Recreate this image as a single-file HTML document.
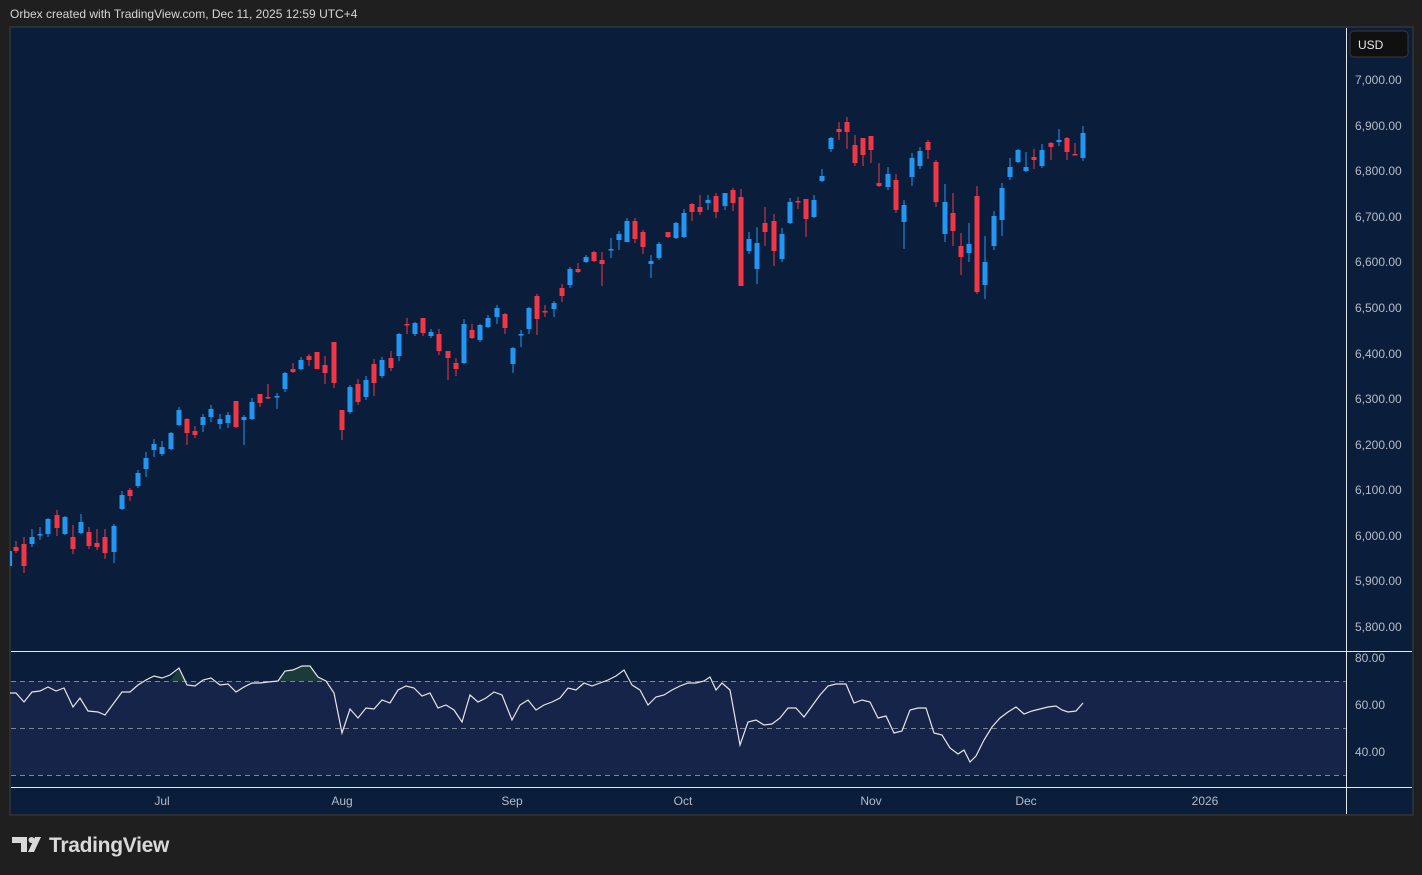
<!DOCTYPE html>
<html><head><meta charset="utf-8"><style>
html,body{margin:0;padding:0;background:#1f1f1f;width:1422px;height:875px;overflow:hidden;font-family:"Liberation Sans",sans-serif}
svg{position:absolute;left:0;top:0}
</style></head><body>
<svg width="1422" height="875" viewBox="0 0 1422 875" xmlns="http://www.w3.org/2000/svg" font-family="Liberation Sans, sans-serif">
<rect x="0" y="0" width="1422" height="875" fill="#1f1f1f"/>
<text x="10" y="18" font-size="12" fill="#d6d6d6">Orbex created with TradingView.com, Dec 11, 2025 12:59 UTC+4</text>
<rect x="9" y="26" width="1405" height="790" fill="#2a2e36"/>
<rect x="11" y="28" width="1401" height="786" fill="#0a1d3a"/>
<!-- RSI band -->
<rect x="11" y="681" width="1335" height="94" fill="#172449"/>
<path d="M170,681L179,668L187,681Z M278,681L285,671L302,666L310,666L318,677L326,681Z" fill="#1b3b3a"/>
<g stroke="#7d8699" stroke-width="1" stroke-dasharray="5,4">
<line x1="11" y1="681.5" x2="1346" y2="681.5"/>
<line x1="11" y1="728.5" x2="1346" y2="728.5"/>
<line x1="11" y1="775.5" x2="1346" y2="775.5"/>
</g>
<polyline fill="none" stroke="#e6e6e6" stroke-width="1.2" points="10,693 16,693 24,702 32,692 40,691 48,687 56,691 64,688 73,707 80,698 88,711 98,712 105,715 122,692 130,692 138,685 146,680 154,676 162,678 170,675 179,668 187,685 195,686 203,680 211,678 220,685 228,684 236,692 244,687 252,683 260,683 268,682 278,681 285,671 293,670 302,666 310,666 318,677 326,681 334,693 342,733 350,709 358,718 366,708 374,709 382,700 390,703 398,690 406,686 414,688 422,696 430,693 438,708 446,705 454,710 462,722 470,695 478,702 486,698 494,692 502,695 512,720 520,705 528,700 536,710 544,705 552,702 560,698 568,688 576,690 584,683 592,686 600,683 608,680 616,676 624,670 632,685 640,690 648,705 656,697 664,695 672,690 680,686 688,683 696,683 704,681 710,677 716,690 722,683 730,690 740,745 748,722 756,720 764,725 772,724 780,718 788,708 796,708 804,717 812,706 820,695 828,686 836,684 846,684 854,703 862,700 870,702 878,718 886,716 894,733 902,731 910,710 918,708 926,708 934,733 942,735 950,748 958,754 964,750 970,762 976,756 984,740 992,727 1000,718 1008,712 1016,707 1024,714 1032,711 1040,709 1048,707 1056,706 1062,710 1068,712 1076,711 1083,703"/>
<!-- separators -->
<g stroke="#e8e8e8" stroke-width="1">
<line x1="11" y1="651.5" x2="1412" y2="651.5"/>
<line x1="11" y1="787.5" x2="1412" y2="787.5"/>
<line x1="1346.5" y1="28" x2="1346.5" y2="814"/>
</g>
<!-- blue candles -->
<path stroke="#2196f3" stroke-width="1" fill="none" d="M32,529V547M40,527V540M48,518V537M65,516V535M81,514V534M114,524V563M122,491V510M138,470V488M146,452V477M154,439V457M162,441V456M171,432V450M179,407V426M203,414V432M211,405V422M220,414V429M228,412V428M244,415V445M252,398V420M277,393V409M285,372V392M301,357V370M350,385V414M366,376V400M382,357V378M399,333V361M415,322V336M431,329V338M464,319V364M480,324V342M488,315V328M497,305V324M513,347V373M521,330V347M529,307V334M554,301V317M570,267V288M586,255V263M611,238V258M619,231V250M627,218V242M651,255V278M659,242V260M676,222V239M684,209V238M708,195V210M725,193V210M749,232V254M757,227V284M782,228V262M790,198V224M814,195V218M822,169V182M831,137V152M888,167V190M904,200V249M912,153V186M920,147V169M945,184V242M969,223V262M985,236V299M994,211V250M1002,183V236M1010,158V180M1018,149V163M1026,152V172M1042,144V168M1059,129V146M1083,126V161"/>
<path fill="#2196f3" d="M29.5,537h5V544h-5zM37.5,534h5V535.5h-5zM45.5,519h5V534h-5zM62.5,517h5V534h-5zM78.5,522h5V533h-5zM111.5,526h5V552h-5zM119.5,495h5V509h-5zM135.5,473h5V486h-5zM143.5,458h5V469h-5zM151.5,444h5V450h-5zM159.5,447h5V454h-5zM168.5,433h5V449h-5zM176.5,410h5V425h-5zM200.5,417h5V425h-5zM208.5,409h5V417h-5zM217.5,419h5V424h-5zM225.5,415h5V423h-5zM241.5,417h5V420h-5zM249.5,402h5V419h-5zM274.5,396h5V397.5h-5zM282.5,373h5V389h-5zM298.5,360h5V369h-5zM347.5,387h5V412h-5zM363.5,380h5V397h-5zM379.5,360h5V376h-5zM396.5,334h5V356h-5zM412.5,323h5V334h-5zM428.5,332h5V336h-5zM461.5,324h5V363h-5zM477.5,325h5V340h-5zM485.5,318h5V327h-5zM494.5,308h5V317h-5zM510.5,348h5V364h-5zM518.5,334h5V335.5h-5zM526.5,308h5V329h-5zM551.5,303h5V309h-5zM567.5,269h5V285h-5zM583.5,257h5V262h-5zM608.5,249h5V250.5h-5zM616.5,234h5V240h-5zM624.5,221h5V242h-5zM648.5,261h5V264h-5zM656.5,244h5V258h-5zM673.5,223h5V238h-5zM681.5,213h5V237h-5zM705.5,200h5V203h-5zM722.5,193h5V206h-5zM746.5,239h5V251h-5zM754.5,243h5V269h-5zM779.5,234h5V259h-5zM787.5,202h5V223h-5zM811.5,200h5V217h-5zM819.5,176h5V181h-5zM828.5,138h5V149h-5zM885.5,174h5V187h-5zM901.5,205h5V222h-5zM909.5,158h5V177h-5zM917.5,151h5V166h-5zM942.5,202h5V234h-5zM966.5,244h5V253h-5zM982.5,262h5V285h-5zM991.5,216h5V246h-5zM999.5,188h5V220h-5zM1007.5,167h5V177h-5zM1015.5,150h5V162h-5zM1023.5,167h5V171h-5zM1039.5,150h5V166h-5zM1056.5,140h5V142h-5zM1080.5,133h5V158h-5z"/>
<rect x="10" y="551" width="2" height="15" fill="#2196f3"/>
<!-- red candles -->
<path stroke="#f23645" stroke-width="1" fill="none" d="M16,541V553M24,537V573M57,510V536M73,525V554M89,527V549M97,529V550M105,529V559M130,488V501M187,418V445M195,426V438M236,401V428M260,394V407M268,384V399M293,363V373M309,354V366M317,352V369M325,356V384M334,342V388M342,410V440M358,379V405M374,359V396M391,351V371M407,318V334M423,318V336M439,329V355M448,351V380M456,358V376M472,324V339M505,313V334M537,294V335M545,305V317M562,284V302M578,263V273M594,251V262M602,252V286M635,218V243M643,230V254M668,232V238M692,203V221M700,195V215M716,193V218M733,188V211M741,189V286M765,207V246M774,214V266M798,197V209M806,199V237M839,122V140M847,117V149M855,135V166M863,138V166M871,136V163M879,163V187M896,174V213M928,140V159M936,160V207M953,193V246M961,233V275M977,186V294M1034,149V169M1051,142V160M1067,137V160M1075,143V155"/>
<path fill="#f23645" d="M13.5,547h5V551h-5zM21.5,544h5V566h-5zM54.5,515h5V528h-5zM70.5,537h5V549h-5zM86.5,532h5V546h-5zM94.5,543h5V547h-5zM102.5,537h5V553h-5zM127.5,490h5V496h-5zM184.5,419h5V433h-5zM192.5,431h5V435h-5zM233.5,401h5V427h-5zM257.5,394h5V403h-5zM265.5,397h5V398.5h-5zM290.5,369h5V372h-5zM306.5,356h5V360h-5zM314.5,352h5V369h-5zM322.5,365h5V373h-5zM331.5,342h5V383h-5zM339.5,410h5V430h-5zM355.5,384h5V402h-5zM371.5,364h5V383h-5zM388.5,358h5V368h-5zM404.5,324h5V325.5h-5zM420.5,318h5V333h-5zM436.5,334h5V351h-5zM445.5,351h5V358h-5zM453.5,363h5V369h-5zM469.5,330h5V338h-5zM502.5,314h5V328h-5zM534.5,296h5V319h-5zM542.5,311h5V312.5h-5zM559.5,288h5V296h-5zM575.5,269h5V272h-5zM591.5,252h5V261h-5zM599.5,260h5V264h-5zM632.5,221h5V239h-5zM640.5,232h5V247h-5zM665.5,232h5V237h-5zM689.5,204h5V212h-5zM697.5,207h5V212h-5zM713.5,196h5V212h-5zM730.5,190h5V203h-5zM738.5,197h5V286h-5zM762.5,223h5V232h-5zM771.5,221h5V251h-5zM795.5,201h5V202.5h-5zM803.5,199h5V219h-5zM836.5,129h5V132h-5zM844.5,122h5V132h-5zM852.5,145h5V163h-5zM860.5,138h5V155h-5zM868.5,136h5V150h-5zM876.5,183h5V186h-5zM893.5,180h5V210h-5zM925.5,142h5V150h-5zM933.5,162h5V202h-5zM950.5,213h5V231h-5zM958.5,246h5V257h-5zM974.5,196h5V292h-5zM1031.5,157h5V160h-5zM1048.5,143h5V147h-5zM1064.5,138h5V152h-5zM1072.5,154h5V155.5h-5z"/>
<!-- price scale -->
<rect x="1350" y="31" width="58" height="26" rx="4" fill="#101010" stroke="#3a3a3a"/>
<text x="1358" y="49" font-size="12" fill="#e6e6e6">USD</text>
<g font-size="12" fill="#b6bcc8">
<text x="1355" y="84">7,000.00</text>
<text x="1355" y="130">6,900.00</text>
<text x="1355" y="175">6,800.00</text>
<text x="1355" y="221">6,700.00</text>
<text x="1355" y="266">6,600.00</text>
<text x="1355" y="312">6,500.00</text>
<text x="1355" y="358">6,400.00</text>
<text x="1355" y="403">6,300.00</text>
<text x="1355" y="449">6,200.00</text>
<text x="1355" y="494">6,100.00</text>
<text x="1355" y="540">6,000.00</text>
<text x="1355" y="585">5,900.00</text>
<text x="1355" y="631">5,800.00</text>
<text x="1355" y="662">80.00</text>
<text x="1355" y="709">60.00</text>
<text x="1355" y="756">40.00</text>
</g>
<g font-size="12" fill="#b6bcc8" text-anchor="middle">
<text x="162" y="805">Jul</text>
<text x="342" y="805">Aug</text>
<text x="512" y="805">Sep</text>
<text x="683" y="805">Oct</text>
<text x="871" y="805">Nov</text>
<text x="1026" y="805">Dec</text>
<text x="1205" y="805">2026</text>
</g>
<!-- logo -->
<g fill="#d9d9d9">
<path d="M12,837h15v15h-6v-9h-9z"/>
<circle cx="31.5" cy="840" r="3"/>
<path d="M35,837h6l-7,15h-6z"/>
</g>
<text x="49" y="852" font-size="21" font-weight="bold" fill="#d9d9d9" letter-spacing="-0.3">TradingView</text>
</svg>
</body></html>
